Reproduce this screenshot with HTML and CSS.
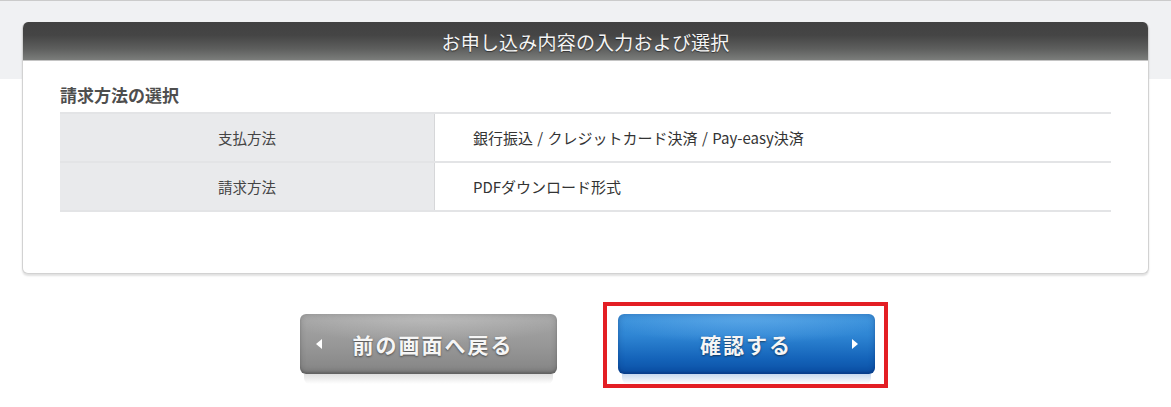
FILE: index.html
```html
<!DOCTYPE html>
<html lang="ja">
<head>
<meta charset="utf-8">
<title>お申し込み内容の入力および選択</title>
<link rel="stylesheet" href="styles.css">
</head>
<body>
<div class="page">
  <section class="card">
    <h1 class="card-title">お申し込み内容の入力および選択</h1>
    <div class="card-body">
      <h2 class="section-title">請求方法の選択</h2>
      <div class="info-table">
        <div class="row">
          <div class="label">支払方法</div>
          <div class="value">銀行振込 / クレジットカード決済 / Pay-easy決済</div>
        </div>
        <div class="row">
          <div class="label">請求方法</div>
          <div class="value">PDFダウンロード形式</div>
        </div>
      </div>
    </div>
  </section>
  <div class="actions">
    <button class="btn btn-back" type="button">
      <svg class="arrow arrow-left" width="7" height="10" viewBox="0 0 7 10"><polygon points="6,0 6,10 0,5" fill="#fff"/></svg>
      <span class="btn-label">前の画面へ戻る</span>
    </button>
    <span class="highlight">
      <button class="btn btn-confirm" type="button">
        <span class="btn-label">確認する</span>
        <svg class="arrow arrow-right" width="7" height="10" viewBox="0 0 7 10"><polygon points="0,0 0,10 6,5" fill="#fff"/></svg>
      </button>
    </span>
  </div>
</div>
</body>
</html>
```
FILE: styles.css
```css
html {
  background: #fff;
}
body {
  margin: 0;
  min-height: 407px;
  font-family: "Noto Sans CJK JP", "Noto Sans", sans-serif;
  color: #333;
  background: linear-gradient(to bottom, #cbcbcb 0, #cbcbcb 1px, #f0f1f3 1px, #f0f1f3 79px, #fff 79px) no-repeat;
}
.page {
  padding-top: 22px;
}
.card {
  margin: 0 22px;
  background: #fff;
  border: 1px solid #d2d2d2;
  border-top: none;
  border-radius: 6px;
  box-shadow: 0 2px 2px rgba(0, 0, 0, 0.12);
  overflow: hidden;
}
.card-title {
  margin: 0;
  height: 38px;
  display: flex;
  align-items: center;
  justify-content: center;
  font-size: 19px;
  font-weight: normal;
  letter-spacing: 0.2px;
  color: #f4f4f4;
  text-shadow: 0 1px 1px rgba(0, 0, 0, 0.5);
  background: linear-gradient(to bottom, #414141 0%, #454545 35%, #5d5e5d 70%, #7b7d7b 100%);
  border-bottom: 1px solid #c4c4c4;
}
.card-body {
  padding: 24px 37px 61px 37px;
}
.section-title {
  margin: 0 0 7px;
  font-size: 17px;
  line-height: 20px;
  font-weight: bold;
  color: #4e4e4e;
}
.info-table {
  border-top: 2px solid #e3e4e6;
}
.row {
  display: grid;
  grid-template-columns: 375px 1fr;
  border-bottom: 2px solid #e3e4e6;
}
.label {
  height: 47px;
  display: flex;
  align-items: center;
  justify-content: center;
  background: #e9eaec;
  border-right: 1px solid #d6d7d9;
  font-size: 14.5px;
  color: #444;
}
.value {
  height: 47px;
  display: flex;
  align-items: center;
  padding-left: 38px;
  font-size: 15px;
  word-spacing: 1px;
  color: #333;
}
.actions {
  display: flex;
  justify-content: center;
  gap: 61px;
  margin-top: 40px;
  padding-left: 3px;
}
.btn {
  position: relative;
  width: 257px;
  height: 60px;
  padding: 0;
  border: none;
  border-radius: 6px;
  display: flex;
  align-items: center;
  justify-content: center;
  font-family: "Noto Sans CJK JP", sans-serif;
  font-size: 21px;
  font-weight: bold;
  letter-spacing: 2px;
  color: #f6f6f6;
  text-shadow: 0 1px 2px rgba(0, 0, 0, 0.5);
  cursor: pointer;
}
.btn::after {
  content: "";
  position: absolute;
  left: 4px;
  right: 4px;
  top: 100%;
  height: 10px;
  border-radius: 0 0 6px 6px;
}
.btn-back {
  background:
    radial-gradient(ellipse 60% 50% at 50% 0%, rgba(255, 255, 255, 0.28), rgba(255, 255, 255, 0) 100%),
    linear-gradient(to bottom, #a6a6a6 0%, #989898 50%, #8a8a8a 85%, #7d7d7d 100%);
  box-shadow: inset 0 0 6px rgba(0, 0, 0, 0.2), inset 0 -2px 2px rgba(0, 0, 0, 0.15);
  padding-left: 10px;
}
.btn-back::after {
  background: linear-gradient(to bottom, rgba(160, 160, 160, 0.35), rgba(255, 255, 255, 0));
}
.btn-confirm {
  background:
    radial-gradient(ellipse 60% 50% at 50% 0%, rgba(140, 200, 250, 0.45), rgba(140, 200, 250, 0) 100%),
    linear-gradient(to bottom, #3a92dc 0%, #2f86d4 35%, #1463b9 75%, #0a4ea3 100%);
  box-shadow: inset 0 0 6px rgba(0, 30, 90, 0.3), inset 0 -2px 2px rgba(0, 20, 80, 0.2);
}
.btn-confirm::after {
  background: linear-gradient(to bottom, rgba(30, 100, 190, 0.25), rgba(255, 255, 255, 0));
}
.arrow {
  position: absolute;
  top: 25px;
}
.arrow-left {
  left: 16px;
}
.arrow-right {
  right: 16px;
}
.highlight {
  position: relative;
  display: block;
}
.highlight::before {
  content: "";
  position: absolute;
  top: -12px;
  left: -15px;
  right: -13px;
  bottom: -14px;
  border: 4px solid #e31e24;
  pointer-events: none;
}
```
